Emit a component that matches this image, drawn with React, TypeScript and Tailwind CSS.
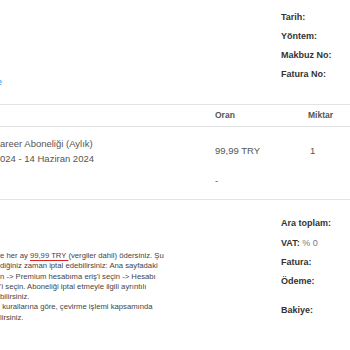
const labelCls = "font-bold text-[9px] text-[#333] leading-[19px] whitespace-nowrap";

const notes = [
  "diğiniz zaman iptal edebilirsiniz: Ana sayfadaki",
  "n -> Premium hesabıma eriş'i seçin -> Hesabı",
  "'i seçin. Aboneliği iptal etmeyle ilgili ayrıntılı",
  "bilirsiniz.",
  " kurallarına göre, çevirme işlemi kapsamında",
  "lirsiniz.",
];

export default function App() {
  return (
    <div className="w-[350px] h-[350px] overflow-hidden bg-white font-['Liberation_Sans',Arial,sans-serif] text-[#555]">
      {/* invoice header: link on the left, meta labels on the right */}
      <div className="flex h-[104px]">
        <div className="flex-1 pt-[76px]">
          <a className="block -ml-[3px] text-[9px] leading-[12px] text-[#3d8bd4]">e</a>
        </div>
        <div className="w-[69px] pt-[8px]">
          <div className={labelCls}>Tarih:</div>
          <div className={labelCls}>Yöntem:</div>
          <div className={labelCls}>Makbuz No:</div>
          <div className={labelCls}>Fatura No:</div>
        </div>
      </div>

      {/* line items */}
      <div className="grid grid-cols-[215px_93px_42px] border-y border-[#e3e3e3] h-[23px] items-center text-[8.5px] font-bold text-[#555]">
        <div />
        <div>Oran</div>
        <div>Miktar</div>
      </div>
      <div className="grid grid-cols-[215px_93px_42px] border-b border-[#e3e3e3] h-[73px] text-[9.5px] leading-[15px] whitespace-nowrap">
        <div className="pt-[9px]">
          <div>areer Aboneliği (Aylık)</div>
          <div>024 - 14 Haziran 2024</div>
        </div>
        <div className="pt-[16px]">
          <div>99,99 TRY</div>
          <div className="mt-[15px]">-</div>
        </div>
        <div className="pt-[16px] pl-[2px]">1</div>
      </div>

      {/* notes and totals */}
      <div className="flex">
        <div className="flex-1 pt-[51px] text-[7.7px] leading-[10.3px] whitespace-nowrap text-[#444]">
          <div>
            e her ay{" "}
            <span className="underline decoration-[#d22] underline-offset-2">99,99 TRY </span>
            (vergiler dahil) ödersiniz. Şu
          </div>
          {notes.map((line, i) => (
            <div key={i} className="whitespace-pre">{line}</div>
          ))}
        </div>
        <div className="w-[69px] pt-[13px]">
          <div className={labelCls + " leading-[21px]"}>Ara toplam:</div>
          <div className={labelCls}>
            VAT: <span className="font-normal text-[#777]">% 0</span>
          </div>
          <div className={labelCls}>Fatura:</div>
          <div className={labelCls}>Ödeme:</div>
          <div className={labelCls + " mt-[10px]"}>Bakiye:</div>
        </div>
      </div>
    </div>
  );
}
